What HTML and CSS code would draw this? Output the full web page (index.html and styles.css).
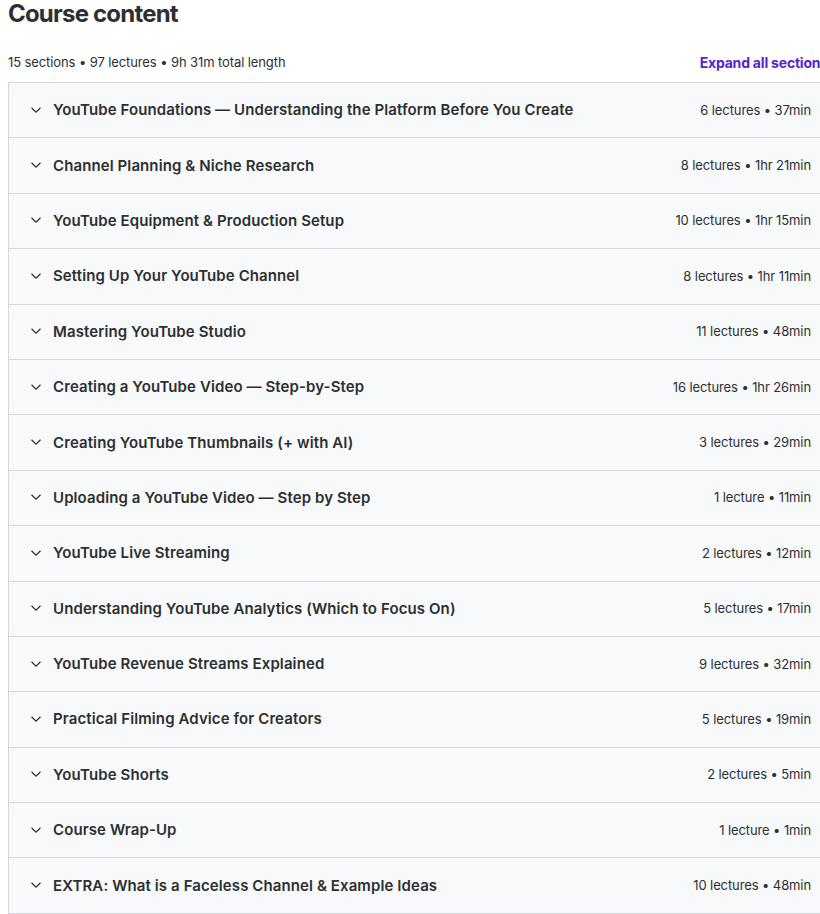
FILE: index.html
```html
<!DOCTYPE html>
<html lang="en">
<head>
  <meta charset="UTF-8">
  <title>Course content</title>
  <link rel="stylesheet" href="styles.css">
</head>
<body>
  <h1>Course content</h1>

  <div class="summary">
    <span>15 sections • 97 lectures • 9h 31m total length</span>
    <a class="expand" href="#">Expand all sections</a>
  </div>

  <div class="sections">
    <div class="row"><span class="chev"><svg viewBox="0 0 12 8"><path d="M1.5 1.8 6 6.2l4.5-4.4"/></svg></span><span class="name">YouTube Foundations — Understanding the Platform Before You Create</span><span class="meta">6 lectures • 37min</span></div>
    <div class="row"><span class="chev"><svg viewBox="0 0 12 8"><path d="M1.5 1.8 6 6.2l4.5-4.4"/></svg></span><span class="name">Channel Planning &amp; Niche Research</span><span class="meta">8 lectures • 1hr 21min</span></div>
    <div class="row"><span class="chev"><svg viewBox="0 0 12 8"><path d="M1.5 1.8 6 6.2l4.5-4.4"/></svg></span><span class="name">YouTube Equipment &amp; Production Setup</span><span class="meta">10 lectures • 1hr 15min</span></div>
    <div class="row"><span class="chev"><svg viewBox="0 0 12 8"><path d="M1.5 1.8 6 6.2l4.5-4.4"/></svg></span><span class="name">Setting Up Your YouTube Channel</span><span class="meta">8 lectures • 1hr 11min</span></div>
    <div class="row"><span class="chev"><svg viewBox="0 0 12 8"><path d="M1.5 1.8 6 6.2l4.5-4.4"/></svg></span><span class="name">Mastering YouTube Studio</span><span class="meta">11 lectures • 48min</span></div>
    <div class="row"><span class="chev"><svg viewBox="0 0 12 8"><path d="M1.5 1.8 6 6.2l4.5-4.4"/></svg></span><span class="name">Creating a YouTube Video — Step-by-Step</span><span class="meta">16 lectures • 1hr 26min</span></div>
    <div class="row"><span class="chev"><svg viewBox="0 0 12 8"><path d="M1.5 1.8 6 6.2l4.5-4.4"/></svg></span><span class="name">Creating YouTube Thumbnails (+ with AI)</span><span class="meta">3 lectures • 29min</span></div>
    <div class="row"><span class="chev"><svg viewBox="0 0 12 8"><path d="M1.5 1.8 6 6.2l4.5-4.4"/></svg></span><span class="name">Uploading a YouTube Video — Step by Step</span><span class="meta">1 lecture • 11min</span></div>
    <div class="row"><span class="chev"><svg viewBox="0 0 12 8"><path d="M1.5 1.8 6 6.2l4.5-4.4"/></svg></span><span class="name">YouTube Live Streaming</span><span class="meta">2 lectures • 12min</span></div>
    <div class="row"><span class="chev"><svg viewBox="0 0 12 8"><path d="M1.5 1.8 6 6.2l4.5-4.4"/></svg></span><span class="name">Understanding YouTube Analytics (Which to Focus On)</span><span class="meta">5 lectures • 17min</span></div>
    <div class="row"><span class="chev"><svg viewBox="0 0 12 8"><path d="M1.5 1.8 6 6.2l4.5-4.4"/></svg></span><span class="name">YouTube Revenue Streams Explained</span><span class="meta">9 lectures • 32min</span></div>
    <div class="row"><span class="chev"><svg viewBox="0 0 12 8"><path d="M1.5 1.8 6 6.2l4.5-4.4"/></svg></span><span class="name">Practical Filming Advice for Creators</span><span class="meta">5 lectures • 19min</span></div>
    <div class="row"><span class="chev"><svg viewBox="0 0 12 8"><path d="M1.5 1.8 6 6.2l4.5-4.4"/></svg></span><span class="name">YouTube Shorts</span><span class="meta">2 lectures • 5min</span></div>
    <div class="row"><span class="chev"><svg viewBox="0 0 12 8"><path d="M1.5 1.8 6 6.2l4.5-4.4"/></svg></span><span class="name">Course Wrap-Up</span><span class="meta">1 lecture • 1min</span></div>
    <div class="row"><span class="chev"><svg viewBox="0 0 12 8"><path d="M1.5 1.8 6 6.2l4.5-4.4"/></svg></span><span class="name">EXTRA: What is a Faceless Channel &amp; Example Ideas</span><span class="meta">10 lectures • 48min</span></div>
  </div>
</body>
</html>
```

FILE: styles.css
```css
html, body { overflow: hidden; }
body { margin: 0 0 0 8px; width: 820px; font-family: Inter, "Noto Sans", sans-serif; color: #2d2f31; background: #fff; }
h1 { margin: 0; font-size: 24px; line-height: 27px; font-weight: 700; letter-spacing: -0.8px; }
.summary { display: flex; justify-content: space-between; align-items: center; height: 26px; margin-top: 22px; margin-bottom: 7px; font-size: 13px; letter-spacing: -0.1px; }
.expand { color: #5624d0; font-weight: 700; font-size: 14px; letter-spacing: -0.2px; text-decoration: none; }
.sections { border: 1px solid #d1d7dc; border-bottom: none; }
.row { display: flex; align-items: center; height: 55.4px; box-sizing: border-box; border-bottom: 1px solid #d1d7dc; background: #f7f9fa; padding: 0 16px 0 21px; }
.chev { width: 12px; height: 8px; display: flex; margin-right: 11px; margin-top: -1px; }
.chev svg { width: 12px; height: 8px; fill: none; stroke: #2d2f31; stroke-width: 1.2; }
.name { flex: 1; font-size: 15px; font-weight: 600; letter-spacing: 0.1px; margin-top: -1px; }
.meta { font-size: 13px; letter-spacing: -0.1px; margin-top: -1px; }
```
